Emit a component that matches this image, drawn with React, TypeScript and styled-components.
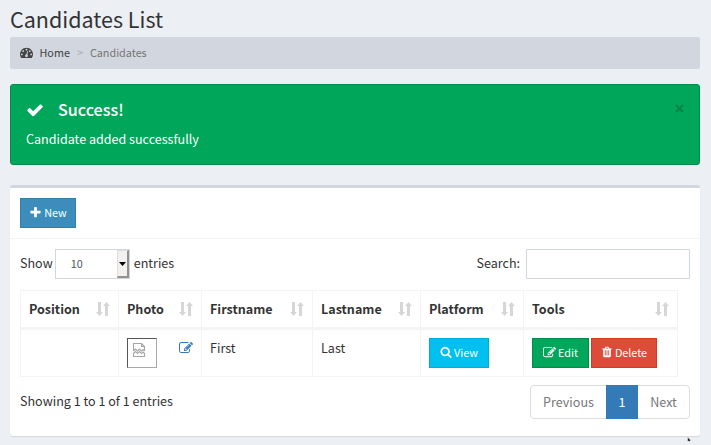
import React from "react";
import styled, { createGlobalStyle } from "styled-components";

const GlobalStyle = createGlobalStyle`
  *, *::before, *::after { box-sizing: border-box; }
  body {
    margin: 0;
    height: 445px;
    overflow: hidden;
    background: #ecf0f5;
    color: #333;
    font-family: "Source Sans Pro", "Noto Sans CJK SC", "Noto Sans", sans-serif;
    font-size: 12.55px;
    line-height: 20px;
  }
  button, input { font: inherit; }
`;

const Page = styled.main`
  position: relative;
  width: 711px;
  height: 445px;
  padding: 5px 11px 0 10px;
`;

const Title = styled.h1`
  margin: 0;
  height: 32px;
  font-size: 21.5px;
  font-weight: 400;
  line-height: 27px;
`;

const Breadcrumb = styled.nav`
  display: flex;
  align-items: center;
  height: 32px;
  padding: 0 0 2px 10px;
  border-radius: 2px;
  background: #d2d6de;
  font-size: 10.8px;
  color: #777;
`;

const HomeLink = styled.a`
  display: flex;
  align-items: center;
  gap: 6.5px;
  color: #444;
`;

const Separator = styled.span`
  margin: 0 7px;
  color: #aaa;
`;

const Alert = styled.section`
  display: flex;
  justify-content: space-between;
  height: 81px;
  margin-top: 15px;
  padding: 15px 14px 0 15px;
  border: 1px solid #008d4c;
  border-radius: 3px;
  background: #00a65a;
  color: #fff;
`;

const AlertTitle = styled.h4`
  display: flex;
  align-items: center;
  gap: 14px;
  height: 20px;
  margin: 0 0 9px;
  font-size: 16.1px;
  font-weight: 500;
  line-height: 20px;
`;

const AlertLabel = styled.span`
  margin: -1px 0 1px;
`;

const AlertText = styled.p`
  margin: 0;
`;

const Close = styled.button`
  align-self: flex-start;
  width: 11px;
  height: 18px;
  padding: 0;
  border: 0;
  background: none;
  color: #000;
  opacity: 0.2;
`;

const Box = styled.section`
  height: 251px;
  margin-top: 20px;
  border-top: 3px solid #d2d6de;
  border-radius: 3px;
  background: #fff;
  box-shadow: 0 1px 1px rgba(0, 0, 0, 0.1);
`;

const BoxHeader = styled.header`
  height: 51px;
  padding: 10px;
  border-bottom: 1px solid #f4f4f4;
`;

const BoxBody = styled.div`
  padding: 10px;
`;

const tones = {
  primary: ["#3c8dbc", "#367fa9"],
  info: ["#00c0ef", "#00acd6"],
  success: ["#00a65a", "#008d4c"],
  danger: ["#dd4b39", "#d73925"],
};

const Button = styled.button<{ $tone: keyof typeof tones; $width: number }>`
  display: inline-flex;
  align-items: center;
  justify-content: center;
  gap: 2px;
  width: ${(p) => p.$width}px;
  height: 30px;
  padding: 0 0 2px;
  border: 1px solid ${(p) => tones[p.$tone][1]};
  background: ${(p) => tones[p.$tone][0]};
  color: #fff;
  font-size: 10.8px;
  line-height: 18px;
`;

const Controls = styled.div`
  display: flex;
  justify-content: space-between;
  height: 30px;
  line-height: 28px;
`;

const Length = styled.label`
  display: flex;
`;

const Select = styled.span`
  display: flex;
  justify-content: space-between;
  width: 75px;
  height: 30px;
  margin: 0 4px 0 2px;
  padding-left: 15px;
  border: 1px solid #d2d6de;
  color: #555;
  font-size: 10.8px;
  line-height: 27px;
`;

const SelectArrow = styled.span`
  display: flex;
  align-items: center;
  justify-content: center;
  width: 12px;
  height: 28px;
  border: 2px solid;
  border-width: 1px 2px 2px 1px;
  border-color: #dedede #929292 #929292 #dedede;
  background: #f2f1f0;
`;

const SearchLabel = styled.label`
  display: flex;
  gap: 6px;
`;

const SearchInput = styled.input`
  width: 164px;
  height: 30px;
  padding: 5px 10px;
  border: 1px solid #d2d6de;
  border-radius: 0;
  background: #fff;
`;

const Table = styled.table`
  width: 658px;
  margin-top: 11px;
  table-layout: fixed;
  border-spacing: 0;
  border-right: 1px solid #f4f4f4;
  border-top: 1px solid #f4f4f4;
`;

const Col = styled.col<{ $width: number }>`
  width: ${(p) => p.$width}px;
`;

const HeadCell = styled.th`
  height: 39px;
  padding: 0 8px;
  border-left: 1px solid #f4f4f4;
  border-bottom: 3px solid #f4f4f4;
  text-align: left;
  font-weight: 700;
`;

const Cell = styled.td`
  height: 47px;
  padding: 8px 8px 0;
  border-left: 1px solid #f4f4f4;
  border-bottom: 1px solid #f4f4f4;
  vertical-align: top;
`;

const Split = styled.div`
  display: flex;
  align-items: center;
  justify-content: space-between;
`;

const PhotoRow = styled.div`
  display: flex;
  justify-content: space-between;
`;

const Photo = styled.div`
  width: 30px;
  height: 30px;
  padding: 4px 5px;
  border: 1px solid;
  border-color: #555 #aaa #aaa #555;
  line-height: 0;
`;

const EditLink = styled.a`
  height: 20px;
  padding-top: 3px;
  color: #337ab7;
  line-height: 0;
`;

const Tools = styled.div`
  display: flex;
  gap: 2px;
`;

const Footer = styled.footer`
  display: flex;
  justify-content: space-between;
  margin-top: 8px;
`;

const Info = styled.div`
  padding-top: 6px;
`;

const Pagination = styled.nav`
  display: flex;
  height: 34px;
  border: 1px solid #ddd;
  border-radius: 4px;
  color: #777;
`;

const PageItem = styled.a<{ $width: number; $active?: boolean }>`
  display: flex;
  align-items: center;
  justify-content: center;
  width: ${(p) => p.$width}px;
  margin: ${(p) => (p.$active ? "-1px 0" : "0")};
  background: ${(p) => (p.$active ? "#337ab7" : "transparent")};
  color: ${(p) => (p.$active ? "#fff" : "#777")};
`;

const Pointer = styled.svg`
  position: absolute;
  left: 686px;
  top: 436px;
`;

const paths = {
  dashboard:
    "M384 1152q0-53-37.5-90.5t-90.5-37.5-90.5 37.5-37.5 90.5 37.5 90.5 90.5 37.5 90.5-37.5 37.5-90.5zm192-448q0-53-37.5-90.5t-90.5-37.5-90.5 37.5-37.5 90.5 37.5 90.5 90.5 37.5 90.5-37.5 37.5-90.5zm428 481l101-382q6-26-7.5-48.5t-38.5-29.5-48 6.5-30 39.5l-101 382q-60 5-107 43.5t-63 98.5q-20 77 20 146t117 89 146-20 89-117q16-60-6-117t-72-91zm660-33q0-53-37.5-90.5t-90.5-37.5-90.5 37.5-37.5 90.5 37.5 90.5 90.5 37.5 90.5-37.5 37.5-90.5zm-640-640q0-53-37.5-90.5t-90.5-37.5-90.5 37.5-37.5 90.5 37.5 90.5 90.5 37.5 90.5-37.5 37.5-90.5zm448 192q0-53-37.5-90.5t-90.5-37.5-90.5 37.5-37.5 90.5 37.5 90.5 90.5 37.5 90.5-37.5 37.5-90.5zm320 448q0 261-141 483-19 29-54 29h-1402q-35 0-54-29-141-221-141-483 0-182 71-348t191-286 286-191 348-71 348 71 286 191 191 286 71 348z",
  check:
    "M1671 566q0 40-28 68l-724 724-136 136q-28 28-68 28t-68-28l-136-136-362-362q-28-28-28-68t28-68l136-136q28-28 68-28t68 28l294 295 656-657q28-28 68-28t68 28l136 136q28 28 28 68z",
  plus: "M1600 736v192q0 40-28 68t-68 28h-416v416q0 40-28 68t-68 28h-192q-40 0-68-28t-28-68v-416h-416q-40 0-68-28t-28-68v-192q0-40 28-68t68-28h416v-416q0-40 28-68t68-28h192q40 0 68 28t28 68v416h416q40 0 68 28t28 68z",
  search:
    "M1216 832q0-185-131.5-316.5t-316.5-131.5-316.5 131.5-131.5 316.5 131.5 316.5 316.5 131.5 316.5-131.5 131.5-316.5zm512 832q0 52-38 90t-90 38q-54 0-90-38l-343-342q-179 124-399 124-143 0-273.5-55.5t-225-150-150-225-55.5-273.5 55.5-273.5 150-225 225-150 273.5-55.5 273.5 55.5 225 150 150 225 55.5 273.5q0 220-124 399l343 343q37 37 37 90z",
  edit: "M888 1184l116-116-152-152-116 116v56h96v96h56zm440-720q-16-16-33 1l-350 350q-17 17-1 33t33-1l350-350q17-17 1-33zm80 594v190q0 119-84.5 203.5t-203.5 84.5h-832q-119 0-203.5-84.5t-84.5-203.5v-832q0-119 84.5-203.5t203.5-84.5h832q63 0 117 25 15 7 18 23 3 17-9 29l-49 49q-14 14-32 8-23-6-45-6h-832q-66 0-113 47t-47 113v832q0 66 47 113t113 47h832q66 0 113-47t47-113v-126q0-13 9-22l64-64q15-15 35-7t20 29zm-96-738l288 288-672 672h-288v-288zm444 132l-92 92-288-288 92-92q28-28 68-28t68 28l152 152q28 28 28 68t-28 68z",
  trash:
    "M704 1376v-704q0-14-9-23t-23-9h-64q-14 0-23 9t-9 23v704q0 14 9 23t23 9h64q14 0 23-9t9-23zm256 0v-704q0-14-9-23t-23-9h-64q-14 0-23 9t-9 23v704q0 14 9 23t23 9h64q14 0 23-9t9-23zm256 0v-704q0-14-9-23t-23-9h-64q-14 0-23 9t-9 23v704q0 14 9 23t23 9h64q14 0 23-9t9-23zm-544-992h448l-48-117q-7-9-17-11h-317q-10 2-17 11zm928 32v64q0 14-9 23t-23 9h-96v948q0 83-47 143.5t-113 60.5h-832q-66 0-113-58.5t-47-141.5v-952h-96q-14 0-23-9t-9-23v-64q0-14 9-23t23-9h309l70-167q15-37 54-63t79-26h320q40 0 79 26t54 63l70 167h309q14 0 23 9t9 23z",
};

const Icon = ({ name, size = 12 }: { name: keyof typeof paths; size?: number }) => (
  <svg width={size} height={size} viewBox="0 0 1792 1792" fill="currentColor" aria-hidden>
    <path d={paths[name]} />
  </svg>
);

const SortIcon = () => (
  <svg width="14" height="16" viewBox="0 0 14 16" fill="#d6d6d6" aria-hidden>
    <path d="M2 1h3v10h2L3.500 15 0 11h2zM9 15h3V5h2L10.500 1 7 5h2z" />
  </svg>
);

const BrokenImage = () => (
  <svg width="13" height="15" viewBox="0 0 13 15" fill="none" stroke="#a6a6a6" strokeWidth="1.1" aria-hidden>
    <path d="M.5 8V.5h8l3 3V8M8.500.500v3h3M.5 8l2-2 2 2 2-2 2 2 1.500-1.500L11.500 8M.5 10.500l2-2 2 2 2-2 2 2 1.500-1.500 1.500 1.500M.5 10v3.500h11V10" />
  </svg>
);

const columns = [
  { label: "Position", width: 98 },
  { label: "Photo", width: 83 },
  { label: "Firstname", width: 111 },
  { label: "Lastname", width: 108 },
  { label: "Platform", width: 103 },
  { label: "Tools", width: 154 },
];

export default function App() {
  return (
    <>
      <GlobalStyle />
      <Page>
        <Title>Candidates List</Title>
        <Breadcrumb>
          <HomeLink>
            <Icon name="dashboard" size={13} />
            Home
          </HomeLink>
          <Separator>&gt;</Separator>
          <span>Candidates</span>
        </Breadcrumb>

        <Alert>
          <div>
            <AlertTitle>
              <Icon name="check" size={18} />
              <AlertLabel>Success!</AlertLabel>
            </AlertTitle>
            <AlertText>Candidate added successfully</AlertText>
          </div>
          <Close aria-label="Close">
            <svg width="11" height="18" viewBox="0 0 11 18" stroke="#000" strokeWidth="2">
              <path d="M2 5l7 7M9 5l-7 7" />
            </svg>
          </Close>
        </Alert>

        <Box>
          <BoxHeader>
            <Button $tone="primary" $width={56}>
              <Icon name="plus" size={13} />
              New
            </Button>
          </BoxHeader>
          <BoxBody>
            <Controls>
              <Length>
                Show
                <Select>
                  10
                  <SelectArrow>
                    <svg width="7" height="4" viewBox="0 0 7 4">
                      <path d="M0 0h7L3.500 4z" />
                    </svg>
                  </SelectArrow>
                </Select>
                entries
              </Length>
              <SearchLabel>
                Search:
                <SearchInput type="search" />
              </SearchLabel>
            </Controls>

            <Table>
              <colgroup>
                {columns.map((c) => (
                  <Col key={c.label} $width={c.width} />
                ))}
              </colgroup>
              <thead>
                <tr>
                  {columns.map((c) => (
                    <HeadCell key={c.label}>
                      <Split>
                        {c.label}
                        <SortIcon />
                      </Split>
                    </HeadCell>
                  ))}
                </tr>
              </thead>
              <tbody>
                <tr>
                  <Cell />
                  <Cell>
                    <PhotoRow>
                      <Photo>
                        <BrokenImage />
                      </Photo>
                      <EditLink>
                        <Icon name="edit" size={14} />
                      </EditLink>
                    </PhotoRow>
                  </Cell>
                  <Cell>First</Cell>
                  <Cell>Last</Cell>
                  <Cell>
                    <Button $tone="info" $width={60}>
                      <Icon name="search" />
                      View
                    </Button>
                  </Cell>
                  <Cell>
                    <Tools>
                      <Button $tone="success" $width={57}>
                        <Icon name="edit" size={13} />
                        Edit
                      </Button>
                      <Button $tone="danger" $width={66}>
                        <Icon name="trash" />
                        Delete
                      </Button>
                    </Tools>
                  </Cell>
                </tr>
              </tbody>
            </Table>

            <Footer>
              <Info>Showing 1 to 1 of 1 entries</Info>
              <Pagination>
                <PageItem $width={75}>Previous</PageItem>
                <PageItem $width={32} $active>
                  1
                </PageItem>
                <PageItem $width={51}>Next</PageItem>
              </Pagination>
            </Footer>
          </BoxBody>
        </Box>
        <Pointer width="6" height="6" viewBox="0 0 6 6">
          <path d="M1.500 1L4.800 4.200 3.800 5.300H1.500z" fill="#222" stroke="#fff" strokeWidth=".5" />
        </Pointer>
      </Page>
    </>
  );
}
